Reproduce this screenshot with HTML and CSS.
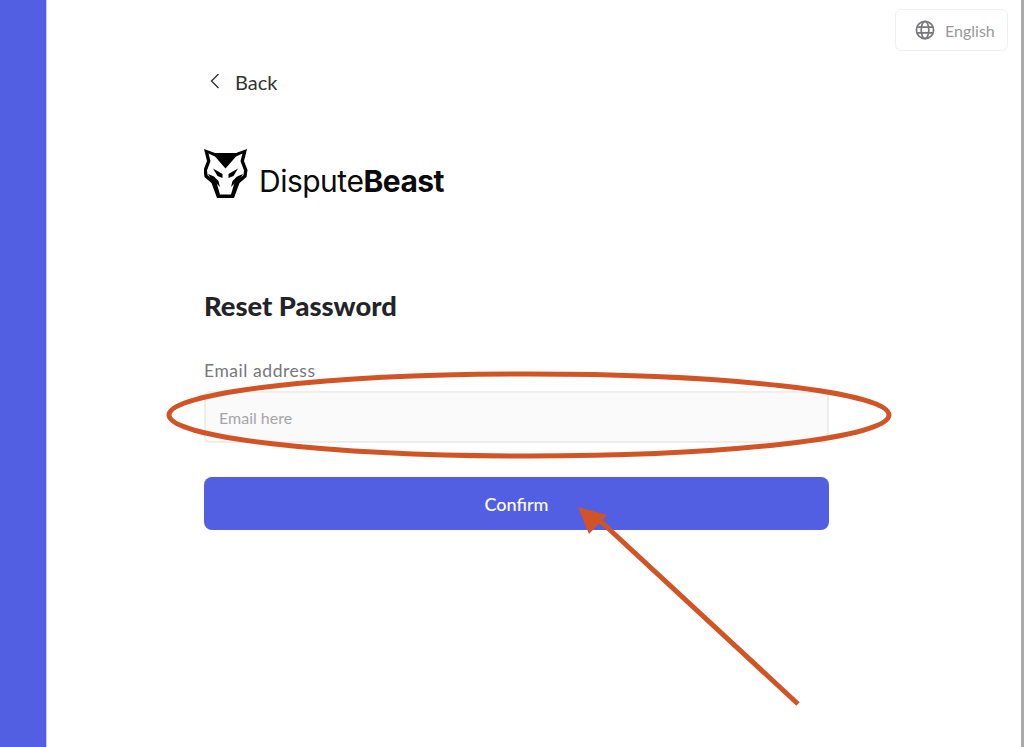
FILE: index.html
```html
<!DOCTYPE html>
<html lang="en">
<head>
    <meta charset="UTF-8">
    <title>Reset Password - DisputeBeast</title>
    <link rel="stylesheet" href="styles.css">
</head>
<body>
    <div class="page">
        <div class="sidebar"></div>
        <div class="main">
            <div class="lang-row">
                <button class="lang">
                    <svg class="globe" width="20" height="20" viewBox="0 0 20 20" fill="none" stroke="#77777b" stroke-width="1.7">
                        <circle cx="10" cy="10" r="8.6"/>
                        <ellipse cx="10" cy="10" rx="3.8" ry="8.6"/>
                        <path d="M2 7.2h16M2 12.800h16"/>
                    </svg>
                    <span>English</span>
                </button>
            </div>
            <div class="content">
                <a class="back" href="#">
                    <svg width="12" height="16" viewBox="0 0 12 16" fill="none" stroke="#333" stroke-width="1.4">
                        <path d="M10.500 0L3.500 7l7 7"/>
                    </svg>
                    <span>Back</span>
                </a>
                <div class="brand">
                    <svg class="wolf" width="44" height="50" viewBox="0 0 44 50">
                        <path fill="#000" d="M0 0L11 4H32L43 0L40 12L43.500 21L42.500 28L35.500 34L30 49H13L7.500 34L.5 28L-.5 21L3 12Z"/>
                        <path fill="#fff" d="M4.500 4.500L11 7.500L21.500 19.500L32 7.500L38.500 4.500L36.500 12L40 21.500L39.500 26L35 30L30.500 33.500L27 45.500H16L12.500 33.500L8 30L3.500 26L3 21.500L6.500 12Z"/>
                        <path fill="#000" d="M9 19.500L18.500 25L18.500 29L13.500 27ZM34 19.500L24.500 25L24.500 29L29.500 27Z"/>
                        <path fill="#000" d="M4 25L10 27.500L14.500 32L16 38L12 34L7 30ZM39 25L33 27.500L28.500 32L27 38L31 34L36 30Z"/>
                    </svg>
                    <span class="brand-name">Dispute<b>Beast</b></span>
                </div>
                <h1>Reset Password</h1>
                <label for="email">Email address</label>
                <input type="text" id="email" placeholder="Email here">
                <button class="confirm">Confirm</button>
            </div>
        </div>
        <div class="edge"></div>
    </div>

    <!-- annotation drawn on top of the screenshot -->
    <svg class="markup" width="1024" height="747" viewBox="0 0 1024 747">
        <ellipse cx="529" cy="415" rx="360" ry="41" fill="none" stroke="#d05426" stroke-width="5"/>
        <path d="M798 704L596 517" fill="none" stroke="#d05426" stroke-width="5"/>
        <path d="M578 507L607 515L589 534Z" fill="#d05426"/>
    </svg>
</body>
</html>
```

FILE: styles.css
```css
* {
    box-sizing: border-box;
}
body {
    margin: 0;
    font-family: Lato, "Noto Sans", sans-serif;
    background-color: #fff;
}
.page {
    display: flex;
    height: 747px;
    overflow: hidden;
}
.sidebar {
    width: 47px;
    background-color: #535fe3;
    border-right: 1px solid #c4c8ff;
}
.main {
    flex: 1;
    padding-top: 9px;
    padding-right: 13px;
}
.edge {
    width: 3px;
    background-color: #a9a9a9;
}
.lang-row {
    display: flex;
    justify-content: flex-end;
}
.lang {
    display: flex;
    align-items: center;
    gap: 10px;
    width: 113px;
    height: 42px;
    padding-left: 19px;
    background: #fff;
    border: 1px solid #f0f0f0;
    border-radius: 6px;
    font-family: inherit;
    font-size: 16px;
    color: #98989c;
}
.content {
    width: 625px;
    margin-left: 157px;
    padding-top: 18px;
}
.back {
    display: flex;
    align-items: center;
    gap: 15px;
    padding-left: 4px;
    height: 26px;
    font-size: 20px;
    color: #333;
    text-decoration: none;
}
.brand {
    display: flex;
    align-items: center;
    gap: 11px;
    margin-top: 54px;
    height: 50px;
}
.brand-name {
    font-family: Inter, sans-serif;
    font-size: 30px;
    letter-spacing: -0.5px;
    color: #0b0b0b;
    padding-top: 14px;
}
.brand-name b {
    font-weight: 700;
}
h1 {
    margin: 91px 0 0;
    font-size: 27.300px;
    line-height: 32px;
    font-weight: 900;
    color: #242428;
}
label {
    display: block;
    margin-top: 39px;
    font-size: 17.500px;
    letter-spacing: .55px;
    line-height: 20px;
    color: #77777b;
}
input {
    display: block;
    width: 100%;
    height: 52px;
    margin-top: 10px;
    padding: 0 13px;
    background-color: #fafafa;
    border: 2px solid #eeeeee;
    border-radius: 6px;
    font-family: inherit;
    font-size: 16px;
}
input::placeholder {
    color: #a5a5a8;
    opacity: 1;
}
.confirm {
    display: block;
    width: 100%;
    height: 53px;
    margin-top: 34px;
    background-color: #535fe3;
    border: none;
    border-radius: 8px;
    color: #fff;
    font-family: inherit;
    font-size: 18px;
    font-weight: 500;
}
.markup {
    position: absolute;
    left: 0;
    top: 0;
    pointer-events: none;
}
```
